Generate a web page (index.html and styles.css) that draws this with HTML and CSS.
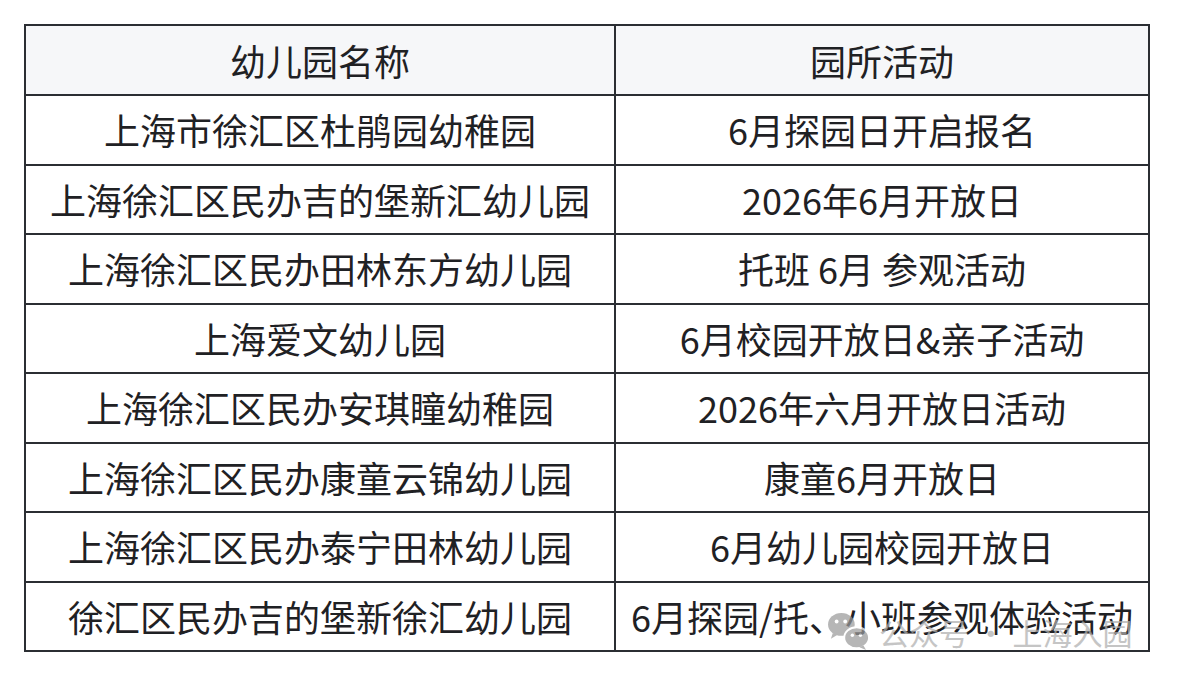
FILE: index.html
```html
<!DOCTYPE html>
<html lang="zh-CN">
<head>
<meta charset="utf-8">
<title>幼儿园园所活动</title>
<link rel="stylesheet" href="styles.css">
</head>
<body>
<div class="page">
  <div class="table-wrap">
    <table class="kg-table">
      <thead>
        <tr><th class="col-name">幼儿园名称</th><th class="col-act">园所活动</th></tr>
      </thead>
      <tbody>
        <tr><td>上海市徐汇区杜鹃园幼稚园</td><td>6月探园日开启报名</td></tr>
        <tr><td>上海徐汇区民办吉的堡新汇幼儿园</td><td>2026年6月开放日</td></tr>
        <tr><td>上海徐汇区民办田林东方幼儿园</td><td>托班 6月 参观活动</td></tr>
        <tr><td>上海爱文幼儿园</td><td>6月校园开放日&amp;亲子活动</td></tr>
        <tr><td>上海徐汇区民办安琪瞳幼稚园</td><td>2026年六月开放日活动</td></tr>
        <tr><td>上海徐汇区民办康童云锦幼儿园</td><td>康童6月开放日</td></tr>
        <tr><td>上海徐汇区民办泰宁田林幼儿园</td><td>6月幼儿园校园开放日</td></tr>
        <tr><td>徐汇区民办吉的堡新徐汇幼儿园</td><td>6月探园/托、小班参观体验活动</td></tr>
      </tbody>
    </table>
    <div class="watermark">
      <svg class="wm-icon" width="44" height="40" viewBox="0 0 46 42">
        <ellipse cx="15" cy="13" rx="14" ry="12" fill="#9a9a9a"/>
        <path d="M6 22 L4 28 L11 24 Z" fill="#9a9a9a"/>
        <circle cx="10" cy="10" r="2" fill="#fff"/>
        <circle cx="19" cy="10" r="2" fill="#fff"/>
        <ellipse cx="31" cy="27" rx="13" ry="11" fill="#9a9a9a" stroke="#fff" stroke-width="2"/>
        <path d="M38 35 L41 40 L34 37 Z" fill="#9a9a9a"/>
        <circle cx="26.5" cy="24.5" r="1.8" fill="#fff"/>
        <circle cx="35" cy="24.5" r="1.8" fill="#fff"/>
      </svg>
      <span class="wm-text">公众号 · 上海入园</span>
    </div>
  </div>
</div>
</body>
</html>
```

FILE: styles.css
```css
html, body {
  margin: 0;
  padding: 0;
  background: #ffffff;
}

.page {
  padding: 24px 0 0 24px;
}

.table-wrap {
  position: relative;
  width: 1126px;
}

.kg-table {
  width: 1126px;
  border-collapse: separate;
  border-spacing: 0;
  border-top: 2px solid #2b2e33;
  border-left: 2px solid #2b2e33;
  table-layout: fixed;
  font-family: "Noto Sans CJK SC", "Noto Sans", sans-serif;
  font-size: 36px;
  color: #1f2124;
}

.kg-table th,
.kg-table td {
  border-right: 2px solid #2b2e33;
  border-bottom: 2px solid #2b2e33;
  text-align: center;
  vertical-align: middle;
  padding: 0;
  font-weight: 400;
  white-space: nowrap;
  line-height: 1.3;
}

.kg-table th {
  height: 68px;
  background: #f6f7f9;
}

.kg-table td {
  height: 67.5px;
}

.col-name {
  width: 588px;
}

.col-act {
  width: 532px;
}

.watermark {
  position: absolute;
  left: 803px;
  top: 588px;
  display: flex;
  align-items: center;
  gap: 8px;
  white-space: nowrap;
  opacity: 0.72;
  pointer-events: none;
}

.wm-icon {
  display: block;
  flex: none;
}

.wm-text {
  font-family: "Noto Sans CJK SC", sans-serif;
  font-size: 30px;
  line-height: 40px;
  color: #b0b0b0;
}
```
